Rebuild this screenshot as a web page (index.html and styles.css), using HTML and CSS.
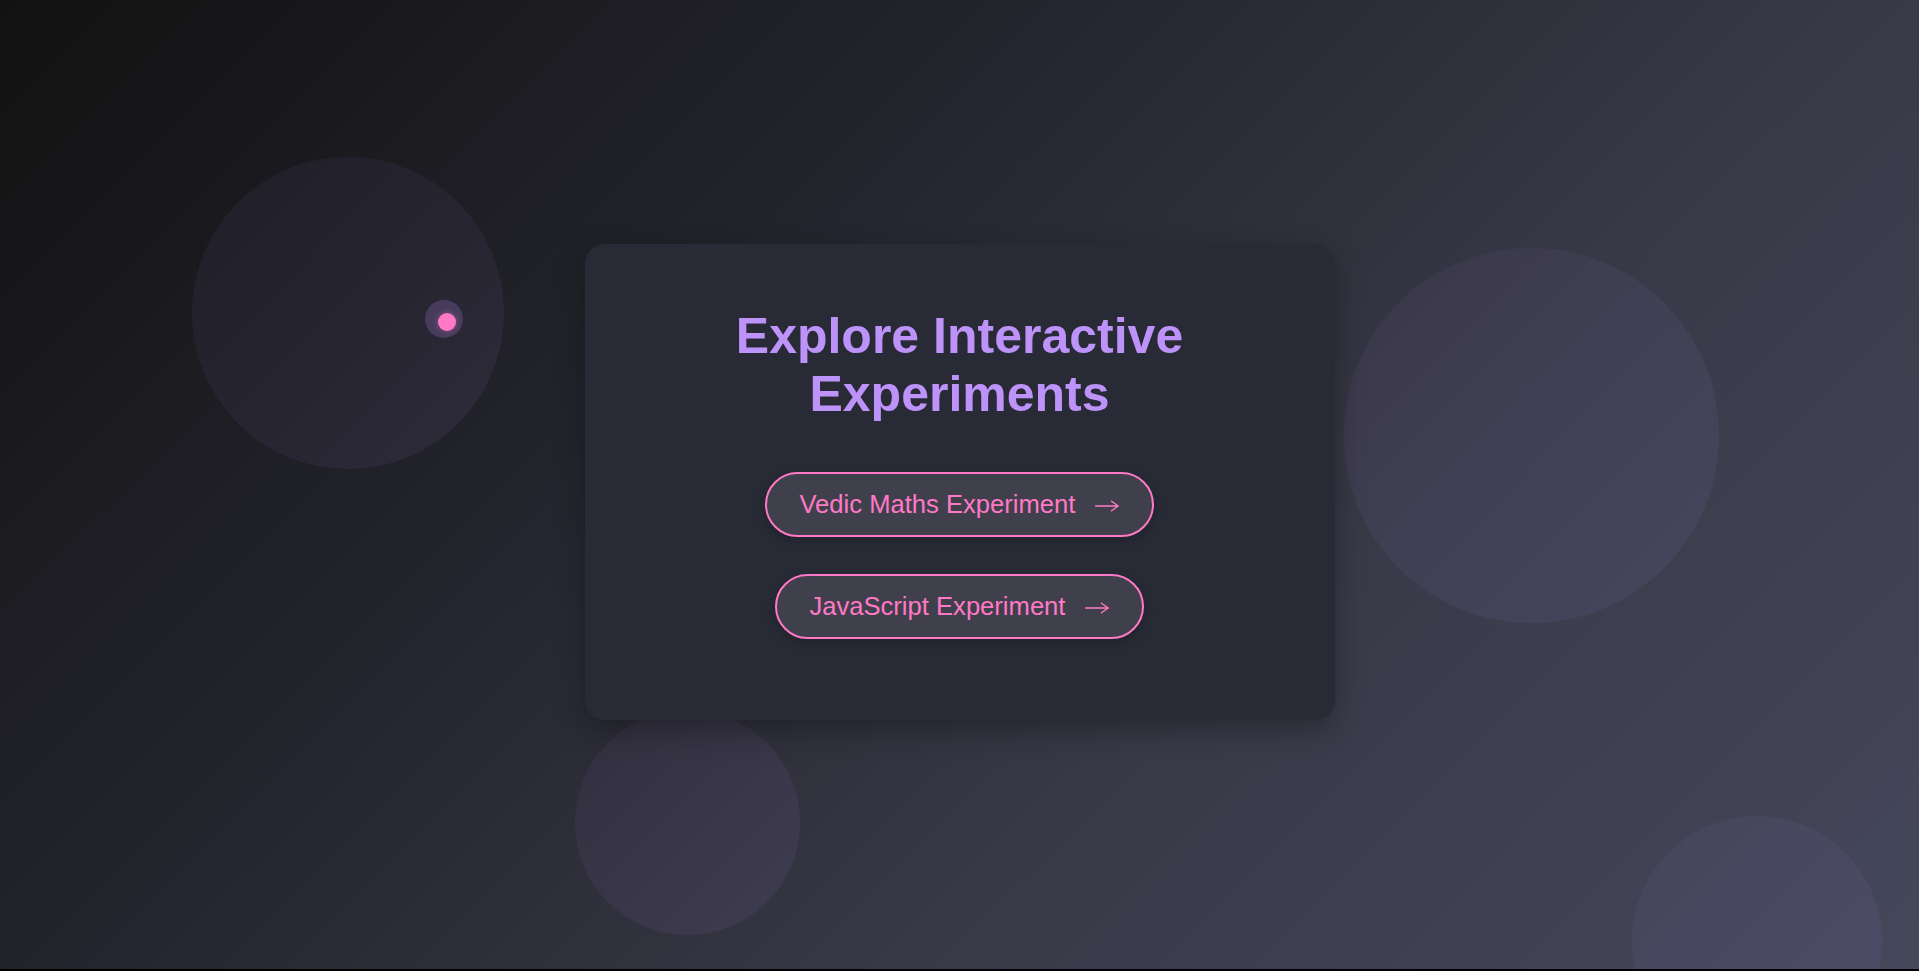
FILE: index.html
```html
<!DOCTYPE html>
<html lang="en">
<head>
<meta charset="utf-8">
<title>Explore Interactive Experiments</title>
<link rel="stylesheet" href="styles.css">
</head>
<body>
<div class="page">
  <div class="bubble bubble-1"></div>
  <div class="bubble bubble-2"></div>
  <div class="bubble bubble-3"></div>
  <div class="bubble bubble-4"></div>

  <main class="card">
    <h1 class="title">Explore Interactive Experiments</h1>
    <nav class="links">
      <a class="btn" href="#">Vedic Maths Experiment <svg class="arrow" viewBox="0 0 24 12" aria-hidden="true"><path d="M0.5 6H23.2M16.5 1.2L23.2 6L16.5 10.8"/></svg></a>
      <a class="btn" href="#">JavaScript Experiment <svg class="arrow" viewBox="0 0 24 12" aria-hidden="true"><path d="M0.5 6H23.2M16.5 1.2L23.2 6L16.5 10.8"/></svg></a>
    </nav>
  </main>

  <div class="cursor-ring"></div>
  <div class="cursor-dot"></div>
</div>
</body>
</html>
```

FILE: styles.css
```css
html {
  background: #000;
}

body {
  margin: 0;
  font-family: "Liberation Sans", Arial, sans-serif;
}

.page {
  position: relative;
  height: calc(100vh - 2px);
  overflow: hidden;
  display: flex;
  align-items: center;
  justify-content: center;
  padding-bottom: 5px;
  box-sizing: border-box;
  background: linear-gradient(135deg, #121212 0%, #23232c 34%, #393a48 66%, #45475b 100%);
}

.bubble {
  position: absolute;
  border-radius: 50%;
  background: linear-gradient(135deg, rgba(160, 120, 220, 0.055), rgba(180, 140, 240, 0.08));
}

.bubble-1 { left: 192px; top: 157px; width: 312px; height: 312px; }
.bubble-2 { left: 1344px; top: 248px; width: 375px; height: 375px; }
.bubble-3 { left: 575px; top: 710px; width: 225px; height: 225px; }
.bubble-4 { left: 1632px; top: 816px; width: 250px; height: 250px; }

.card {
  position: relative;
  z-index: 1;
  width: 750px;
  box-sizing: border-box;
  padding: 63px 48px 81px;
  background: #282a36;
  border-radius: 20px;
  box-shadow: 0 10px 30px rgba(0, 0, 0, 0.3);
  text-align: center;
}

.title {
  margin: 0 0 49px;
  font-size: 50px;
  font-weight: bold;
  line-height: normal;
  color: #bd93f9;
}

.links {
  display: flex;
  flex-direction: column;
  align-items: center;
  gap: 37px;
}

.btn {
  display: inline-block;
  padding: 16px 32px;
  border: 2px solid #ff79c6;
  border-radius: 50px;
  background: #3f404c;
  color: #ff79c6;
  font-size: 25.6px;
  line-height: normal;
  text-decoration: none;
  white-space: nowrap;
  box-shadow: 0 4px 12px rgba(0, 0, 0, 0.2);
}

.arrow {
  width: 24px;
  height: 12px;
  margin-left: 12px;
  margin-right: 1px;
  vertical-align: middle;
  fill: none;
  stroke: currentColor;
  stroke-width: 1.4;
  stroke-linecap: round;
  stroke-linejoin: round;
}

.cursor-ring {
  position: absolute;
  z-index: 2;
  left: 425px;
  top: 300px;
  width: 38px;
  height: 38px;
  border-radius: 50%;
  background: rgba(189, 147, 249, 0.2);
}

.cursor-dot {
  position: absolute;
  z-index: 3;
  left: 438px;
  top: 313px;
  width: 18px;
  height: 18px;
  border-radius: 50%;
  background: #ff79c6;
  box-shadow: 0 0 6px rgba(255, 121, 198, 0.4);
}
```
